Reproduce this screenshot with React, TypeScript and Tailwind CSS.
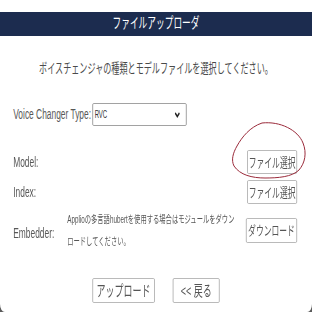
import React from 'react'

const jp = "font-['Liberation_Sans','Noto_Sans_CJK_JP',sans-serif]"

function FileButton({ label }: { label: string }) {
  return (
    <button className="h-[24px] w-[83px] shrink-0 rounded-[2px] border border-[#a8a8a8] bg-white text-[13px] leading-none text-[#555]">
      {label}
    </button>
  )
}

export default function App() {
  return (
    <div className={`relative h-[312px] w-[312px] overflow-hidden bg-[#5a5a5a] ${jp}`}>
      {/* dialog, drawn wide and squeezed horizontally like the source */}
      <div className="flex h-[312px] w-[520px] origin-top-left scale-x-[0.6] flex-col rounded-b-[8px] bg-white pt-[12px]">
        <div className="flex h-[24px] items-center justify-center bg-[#1c2c4f] text-[14.5px] text-white">
          ファイルアップローダ
        </div>

        <p className="mt-[23px] text-center text-[13.5px] leading-[20px] text-[#4a4a4a]">
          ボイスチェンジャの種類とモデルファイルを選択してください。
        </p>

        <div className="mt-[24px] flex h-[23px] items-center pl-[22px] text-[14px] text-[#585858]">
          <span>Voice Changer Type:</span>
          <div className="ml-[2px] flex h-[23px] w-[157px] items-center justify-between rounded-[2px] border border-[#8a8a8a] pl-[3px] pr-[10px] text-[10px] text-[#333]">
            <span>RVC</span>
            <svg width="9" height="6" viewBox="0 0 9 6">
              <path d="M1 1 L4.5 4.5 L8 1" fill="none" stroke="#222" strokeWidth="2" />
            </svg>
          </div>
        </div>

        <div className="mt-[24px] flex h-[24px] items-center justify-between pl-[22px] pr-[25px] text-[14px] text-[#585858]">
          <span>Model:</span>
          <FileButton label="ファイル選択" />
        </div>

        <div className="mt-[6px] flex h-[24px] items-center justify-between pl-[22px] pr-[25px] text-[14px] text-[#585858]">
          <span>Index:</span>
          <FileButton label="ファイル選択" />
        </div>

        <div className="mt-[4px] flex h-[44px] items-center pl-[22px] pr-[25px] text-[14px] text-[#585858]">
          <span className="mt-[6px] w-[90px] shrink-0">Embedder:</span>
          <p className="w-[282px] text-[10.5px] leading-[22px] text-[#555]">
            Applioの多言語hubertを使用する場合はモジュールをダウンロードしてください。
          </p>
          <div className="ml-auto">
            <button className="h-[25px] w-[85px] rounded-[2px] border border-[#a8a8a8] bg-white text-[13px] leading-none text-[#555]">
              ダウンロード
            </button>
          </div>
        </div>

        <div className="mt-[26px] flex justify-center gap-[30px]">
          <button className="h-[25px] w-[104px] rounded-[2px] border border-[#a8a8a8] bg-white text-[15px] leading-none text-[#555]">
            アップロード
          </button>
          <button className="h-[25px] w-[78px] rounded-[2px] border border-[#a8a8a8] bg-white text-[15px] leading-none text-[#555]">
            &lt;&lt; 戻る
          </button>
        </div>
      </div>

      {/* hand-drawn red mark around the Model button */}
      <svg className="pointer-events-none absolute left-0 top-0" width="312" height="312" viewBox="0 0 312 312">
        <path
          d="M262 123 C280 121 298 130 303 143 C307 153 305 163 299 170 C292 177 278 178 265 178 C252 178 240 175 234 166 C231 160 233 153 237 146 C242 137 250 127 262 123"
          fill="none"
          stroke="#9a2a3a"
          strokeWidth="1"
        />
      </svg>
    </div>
  )
}
